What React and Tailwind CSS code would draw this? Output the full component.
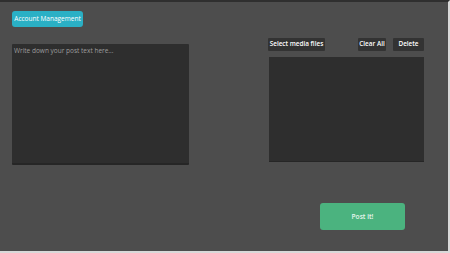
import React, { useState } from "react";

export default function App() {
  const [text, setText] = useState("");

  return (
    <div
      className="w-[450px] h-[253px] bg-[#4d4d4d] border-t-2 border-t-[#2f2f2f] border-r-2 border-r-[#d9d9d9] border-b-2 border-b-[#d9d9d9] flex overflow-hidden"
      style={{ fontFamily: '"Open Sans", "Noto Sans", sans-serif' }}
    >
      {/* left column */}
      <div className="flex flex-col pl-[12px] pt-[9px] w-[189px]">
        <button className="self-start w-[71px] h-[16px] rounded-[3px] bg-[#2ab0c5] text-white text-[6.5px] leading-none whitespace-nowrap">
          Account Management
        </button>
        <textarea
          value={text}
          onChange={(e) => setText(e.target.value)}
          placeholder="Write down your post text here..."
          className="mt-[17px] w-[177px] h-[121px] bg-[#2e2e2e] text-[6.5px] text-[#d0d0d0] placeholder:text-[#9d9d9d] px-[2px] py-[2px] resize-none outline-none border-b-2 border-b-[#262626] rounded-[1px]"
        />
      </div>

      {/* right column */}
      <div className="flex flex-col ml-[79px] pt-[36px] w-[157px]">
        <div className="flex items-center">
          <button className="w-[57px] h-[13px] bg-[#333333] text-white text-[6.4px] font-semibold leading-none rounded-[1px] whitespace-nowrap">
            Select media files
          </button>
          <button className="ml-auto w-[28px] h-[13px] bg-[#333333] text-white text-[6.4px] font-semibold leading-none rounded-[1px] whitespace-nowrap">
            Clear All
          </button>
          <button className="ml-[7px] mr-[1px] h-[13px] w-[31px] bg-[#333333] text-white text-[6.4px] font-semibold leading-none rounded-[1px]">
            Delete
          </button>
        </div>
        <div className="mt-[6px] ml-[1px] w-[155px] h-[105px] bg-[#2e2e2e] border-b border-b-[#262626]" />
        <button className="mt-[41px] ml-[52px] w-[85px] h-[27px] rounded-[3px] bg-[#4bb37f] text-[#e8f5ee] text-[6.6px] font-semibold">
          Post it!
        </button>
      </div>
    </div>
  );
}
